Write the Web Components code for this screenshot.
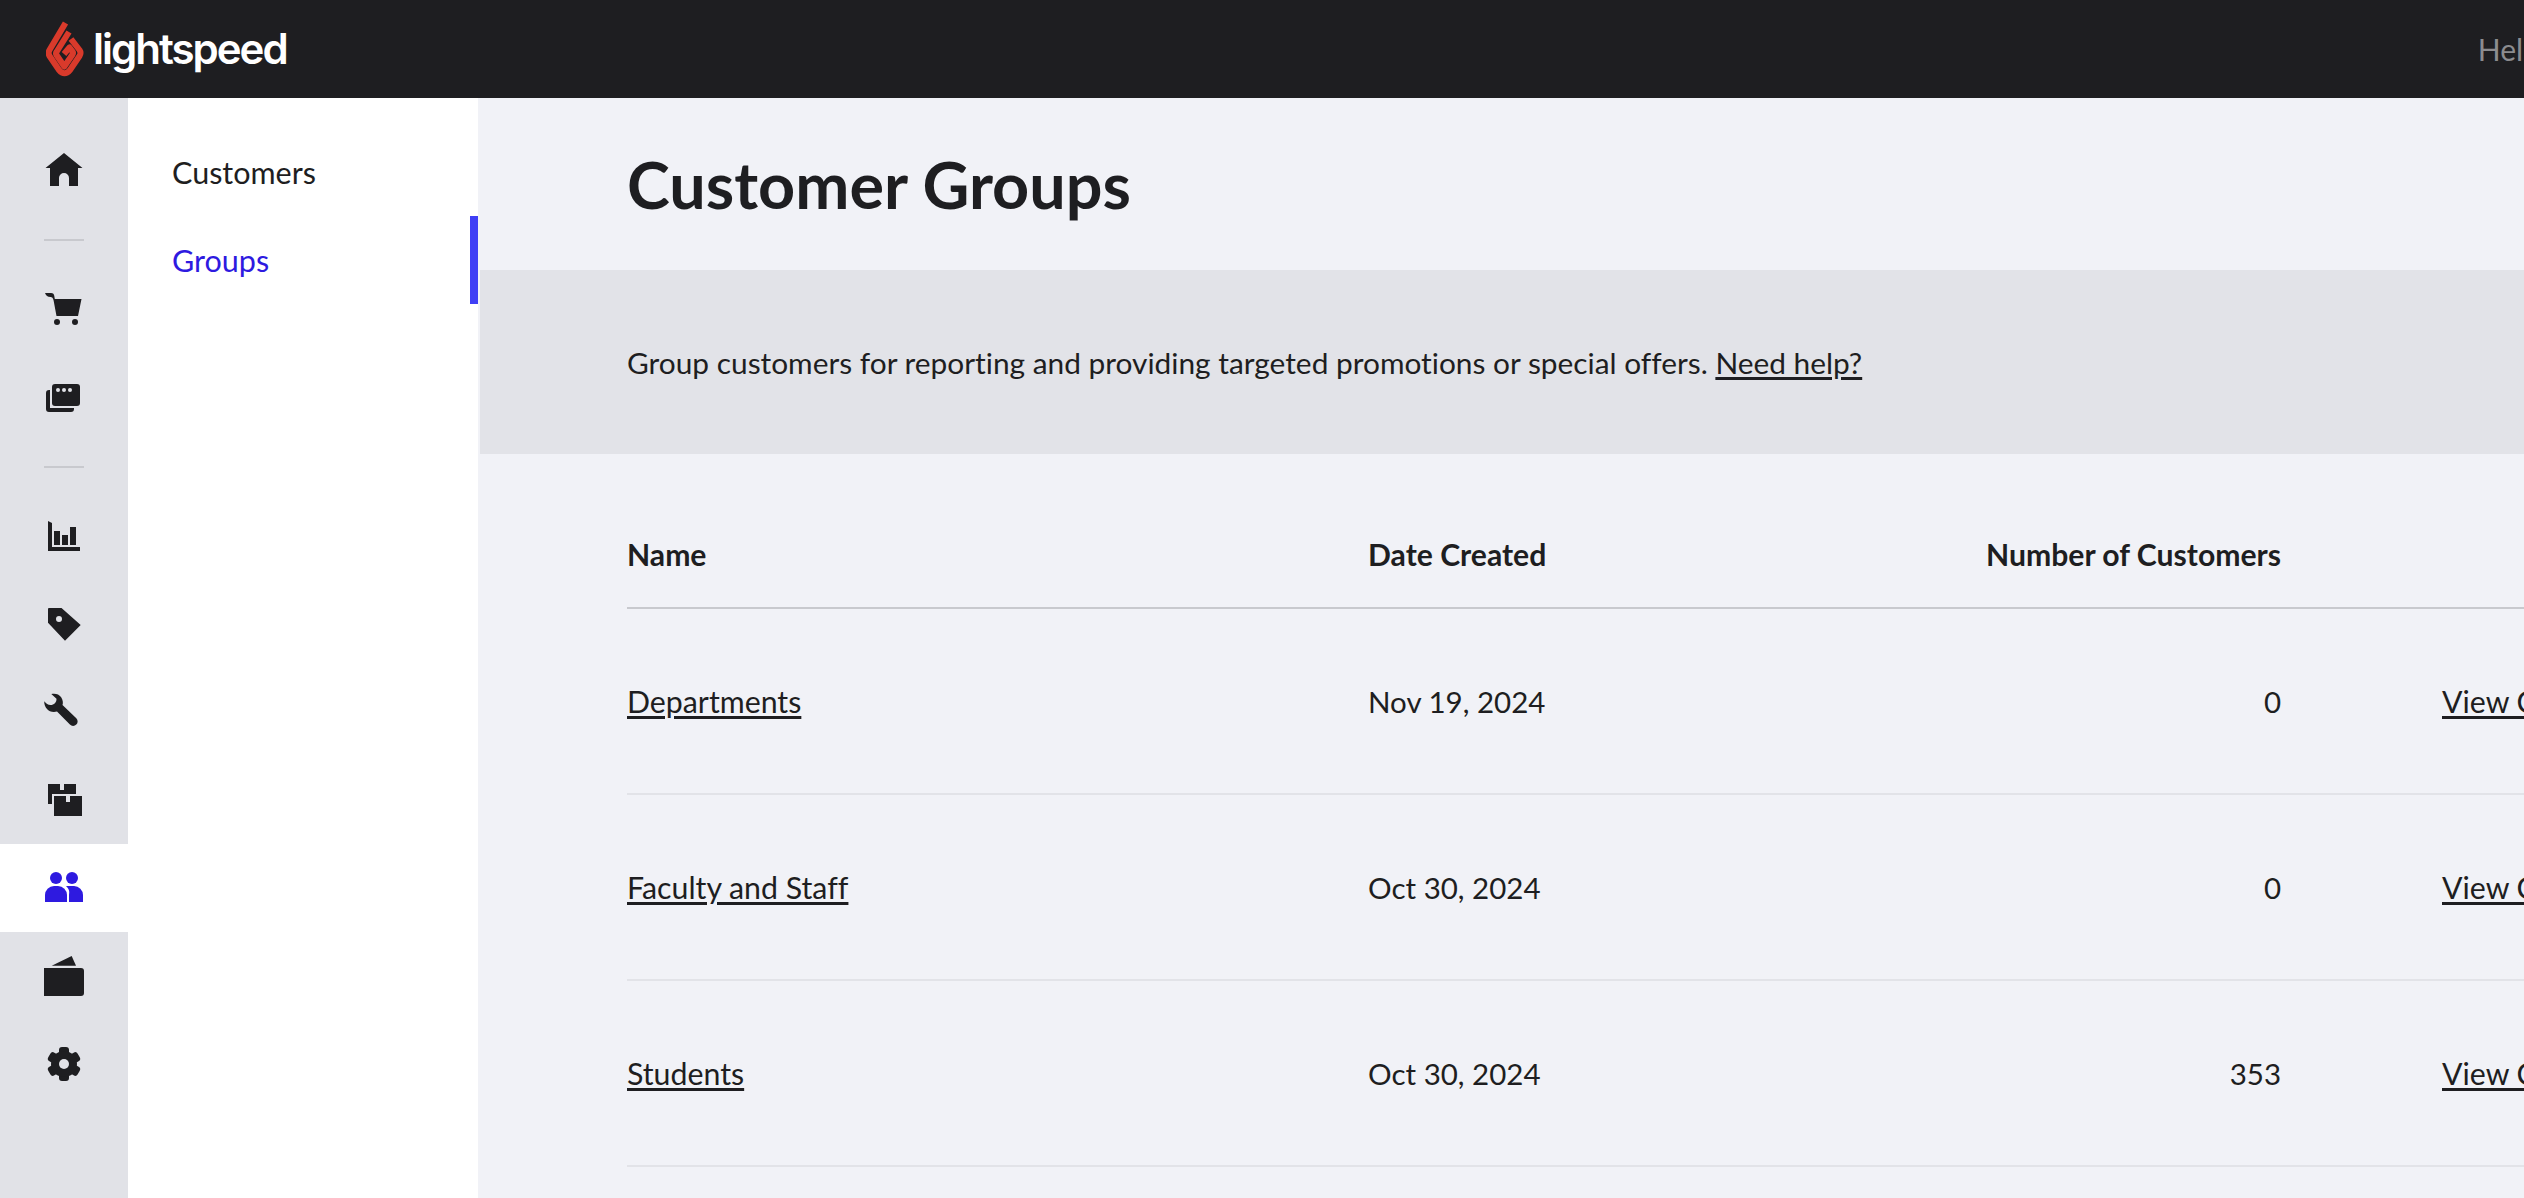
<!DOCTYPE html>
<html>
<head>
<meta charset="utf-8">
<title>Customer Groups</title>
<style>
  html, body { margin: 0; height: 100%; overflow: hidden; }
  body {
    display: flex;
    flex-direction: column;
    width: 2524px;
    height: 1198px;
    background: #f1f2f7;
    color: #1e1e21;
    font-family: Lato, "Liberation Sans", sans-serif;
    font-size: 30px;
    font-variant-ligatures: none;
    --rail-bg: #e1e2e7;
    --ink: #1e1e21;
    --accent: #2e1ae0;
  }
  .shell { display: flex; flex: 1; min-height: 0; }
  a { color: inherit; text-decoration-thickness: 2.6px; text-underline-offset: 2.5px; }
</style>
</head>
<body>
  <ls-topbar></ls-topbar>
  <div class="shell">
    <ls-rail>
      <ls-rail-item icon="home"></ls-rail-item>
      <ls-rail-sep></ls-rail-sep>
      <ls-rail-item icon="cart"></ls-rail-item>
      <ls-rail-item icon="cards"></ls-rail-item>
      <ls-rail-sep></ls-rail-sep>
      <ls-rail-item icon="chart"></ls-rail-item>
      <ls-rail-item icon="tag"></ls-rail-item>
      <ls-rail-item icon="wrench"></ls-rail-item>
      <ls-rail-item icon="boxes"></ls-rail-item>
      <ls-rail-item icon="people" active></ls-rail-item>
      <ls-rail-item icon="wallet"></ls-rail-item>
      <ls-rail-item icon="gear"></ls-rail-item>
    </ls-rail>
    <ls-subnav>
      <ls-subnav-item>Customers</ls-subnav-item>
      <ls-subnav-item active>Groups</ls-subnav-item>
    </ls-subnav>
    <ls-page>
      <span slot="title">Customer Groups</span>
      <span slot="intro">Group customers for reporting and providing targeted promotions or special offers. <a href="#">Need help?</a></span>
      <ls-group-table>
        <ls-group-row name="Departments" created="Nov 19, 2024" count="0"></ls-group-row>
        <ls-group-row name="Faculty and Staff" created="Oct 30, 2024" count="0"></ls-group-row>
        <ls-group-row name="Students" created="Oct 30, 2024" count="353"></ls-group-row>
      </ls-group-table>
    </ls-page>
  </div>

<script>
  const ICONS = {
    home: `<path d="M20 3 38.5 18H34V36H25V28a5 5 0 0 0-10 0V36H6V18H1.5Z"/>`,
    cart: `<path d="M1 4H7C9.2 4 10 5.2 10.3 7L10.8 10H37.5L34 27H12.5L9.6 11.5C9.2 9 8 8 6.5 8 3.5 8 2 6.5 1 4Z"/>
           <circle cx="13" cy="33" r="3"/><circle cx="31" cy="33" r="3"/>`,
    cards: `<rect x="8" y="7" width="28" height="22" rx="3"/>
            <path d="M6 13V31H30V32a3 3 0 0 1-3 3H5a3 3 0 0 1-3-3V16a3 3 0 0 1 3-3Z"/>
            <g fill="var(--rail-bg)"><circle cx="14" cy="13" r="2"/><circle cx="20" cy="13" r="2"/><circle cx="26" cy="13" r="2"/></g>`,
    chart: `<path d="M4 5 8 7V31H36V35H4Z"/><path d="M10 15h6v14h-6zM18 19h6v10h-6zM26 11h6v18h-6z"/>`,
    tag: `<path fill-rule="evenodd" d="M5 4H17.5L36.7 21 21 36.7 4 18.7V5a1 1 0 0 1 1-1ZM15 12a3 3 0 1 0 0 6 3 3 0 0 0 0-6Z"/>`,
    wrench: `<path d="M7.3 2C11 1 15 2 17 5 19 8 19.3 11 18.5 13L32.3 26.2a4.5 4.5 0 0 1-6.4 6.4L13 19.5C9 20.5 5 19.5 3 17 1 15 0 12 .3 9.3 2 11.5 4 13 6.5 13 10 13 12.7 10 12.5 6.7Z"/>`,
    boxes: `<path d="M4 4H16V10H20V4H32V14H8V24H4Z"/><path d="M10 16H22V22H26V16H38V36H10Z"/>`,
    people: `<circle cx="12" cy="10" r="6"/><circle cx="28" cy="10" r="6"/>
             <path d="M1 34V27a9 9 0 0 1 9-9h4a9 9 0 0 1 9 9v7Z"/>
             <path d="M22 18h8a9 9 0 0 1 9 9v7H25V27a9 9 0 0 0-3-9Z"/>`,
    wallet: `<path d="M7.7 9.7 27.7 0 32 9.7Z"/><path d="M0 12H37a3 3 0 0 1 3 3V37a3 3 0 0 1-3 3H0Z"/>`,
    gear: `<rect x="15" y="3" width="10" height="34" rx="3"/>
           <rect x="15" y="3" width="10" height="34" rx="3" transform="rotate(60 20 20)"/>
           <rect x="15" y="3" width="10" height="34" rx="3" transform="rotate(120 20 20)"/>
           <circle cx="20" cy="20" r="13"/><circle cx="20" cy="20" r="5" fill="var(--rail-bg)"/>`
  };

  class LsTopbar extends HTMLElement {
    constructor() {
      super();
      this.attachShadow({mode: 'open'}).innerHTML = `
        <style>
          :host { display: flex; flex: none; width: 2640px; height: 98px; background: #1e1e21; align-items: center; justify-content: space-between; }
          .logo { display: flex; align-items: center; padding-left: 46px; }
          svg { width: 38px; height: 56px; display: block; }
          .word { margin-left: 9px; color: #fff; font: 600 42px/1 Inter, sans-serif; letter-spacing: -2px; }
          .help { padding-right: 100px; color: #8c8c8f; font-size: 30px; }
        </style>
        <div class="logo">
          <svg viewBox="0 0 38 56" fill="none" stroke="#d93a2b" stroke-width="6" stroke-linejoin="round">
            <path d="M19.5 2 3.5 29Q1.8 32 3.5 35L13 49Q18.5 55.5 24 49L33.5 35Q35.5 32 33.5 29L25 18"/>
            <path d="M23 11 10.5 31Q9.5 32.5 10.5 34L18.3 45.5 26.5 33.5Q27.5 32 26.5 30.5L23.5 26.5 18 33"/>
          </svg>
          <span class="word">lightspeed</span>
        </div>
        <span class="help">Help</span>`;
    }
  }

  class LsRail extends HTMLElement {
    constructor() {
      super();
      this.attachShadow({mode: 'open'}).innerHTML = `
        <style>
          :host { display: flex; flex-direction: column; flex: none; width: 128px; padding-top: 28px; box-sizing: border-box; background: var(--rail-bg); }
        </style>
        <slot></slot>`;
    }
  }

  class LsRailSep extends HTMLElement {
    constructor() {
      super();
      this.attachShadow({mode: 'open'}).innerHTML = `
        <style>
          :host { display: block; flex: none; width: 40px; height: 2px; margin: 25px 44px 24px; background: #c8c9ce; }
        </style>`;
    }
  }

  class LsRailItem extends HTMLElement {
    constructor() {
      super();
      this.attachShadow({mode: 'open'});
    }
    connectedCallback() {
      this.shadowRoot.innerHTML = `
        <style>
          :host { display: flex; flex: none; height: 88px; align-items: center; justify-content: center; color: var(--ink); }
          :host([active]) { background: #fff; color: var(--accent); }
          svg { width: 40px; height: 40px; display: block; overflow: visible; fill: currentColor; }
        </style>
        <svg viewBox="0 0 40 40">${ICONS[this.getAttribute('icon')]}</svg>`;
    }
  }

  class LsSubnav extends HTMLElement {
    constructor() {
      super();
      this.attachShadow({mode: 'open'}).innerHTML = `
        <style>
          :host { display: flex; flex-direction: column; flex: none; width: 350px; padding-top: 30px; box-sizing: border-box; background: #fff; }
        </style>
        <slot></slot>`;
    }
  }

  class LsSubnavItem extends HTMLElement {
    constructor() {
      super();
      this.attachShadow({mode: 'open'}).innerHTML = `
        <style>
          :host { display: flex; align-items: center; height: 88px; padding-left: 44px; color: var(--ink); font-size: 30.5px; box-sizing: border-box; border-right: 8px solid transparent; }
          :host([active]) { color: var(--accent); border-right-color: #3f3ff5; }
        </style>
        <slot></slot>`;
    }
  }

  class LsPage extends HTMLElement {
    constructor() {
      super();
      this.attachShadow({mode: 'open'}).innerHTML = `
        <style>
          :host { display: block; flex: 1; min-width: 0; }
          header { display: flex; align-items: center; height: 172px; padding-left: 149px; }
          h1 { margin: 0; font-size: 64.7px; font-weight: 700; line-height: 1; }
          .intro { display: flex; align-items: center; height: 184px; margin-left: 2px; padding-left: 147px; background: #e2e3e8; font-size: 29.85px; }
          ::slotted(span) { white-space: nowrap; }
          .body { padding: 50px 0 0 149px; }
        </style>
        <header><h1><slot name="title"></slot></h1></header>
        <div class="intro"><slot name="intro"></slot></div>
        <div class="body"><slot></slot></div>`;
    }
  }

  class LsGroupTable extends HTMLElement {
    constructor() {
      super();
      this.attachShadow({mode: 'open'}).innerHTML = `
        <style>
          :host { display: block; width: 2115px; }
          .head { display: grid; grid-template-columns: 741px 300px 613px 1fr; align-items: center; height: 105px; box-sizing: border-box; padding-bottom: 3px; border-bottom: 2px solid #c8c9ce; font-weight: 700; font-size: 30.15px; }
          .num { text-align: right; }
        </style>
        <div class="head"><span>Name</span><span>Date Created</span><span class="num">Number of Customers</span><span></span></div>
        <slot></slot>`;
    }
  }

  class LsGroupRow extends HTMLElement {
    constructor() {
      super();
      this.attachShadow({mode: 'open'});
    }
    connectedCallback() {
      this.shadowRoot.innerHTML = `
        <style>
          :host { display: grid; grid-template-columns: 741px 300px 613px 1fr; align-items: center; height: 186px; box-sizing: border-box; border-bottom: 2px solid #e2e3e8; font-size: 30.3px; }
          a { color: inherit; text-decoration-thickness: 2.6px; text-underline-offset: 2.5px; }
          .date, .num { font-size: 29.5px; }
          .num { text-align: right; }
          .view { padding-left: 161px; white-space: nowrap; }
        </style>
        <span><a href="#">${this.getAttribute('name')}</a></span>
        <span class="date">${this.getAttribute('created')}</span>
        <span class="num">${this.getAttribute('count')}</span>
        <span class="view"><a href="#">View Customers</a></span>`;
    }
  }

  customElements.define('ls-topbar', LsTopbar);
  customElements.define('ls-rail', LsRail);
  customElements.define('ls-rail-sep', LsRailSep);
  customElements.define('ls-rail-item', LsRailItem);
  customElements.define('ls-subnav', LsSubnav);
  customElements.define('ls-subnav-item', LsSubnavItem);
  customElements.define('ls-page', LsPage);
  customElements.define('ls-group-table', LsGroupTable);
  customElements.define('ls-group-row', LsGroupRow);
</script>
</body>
</html>
